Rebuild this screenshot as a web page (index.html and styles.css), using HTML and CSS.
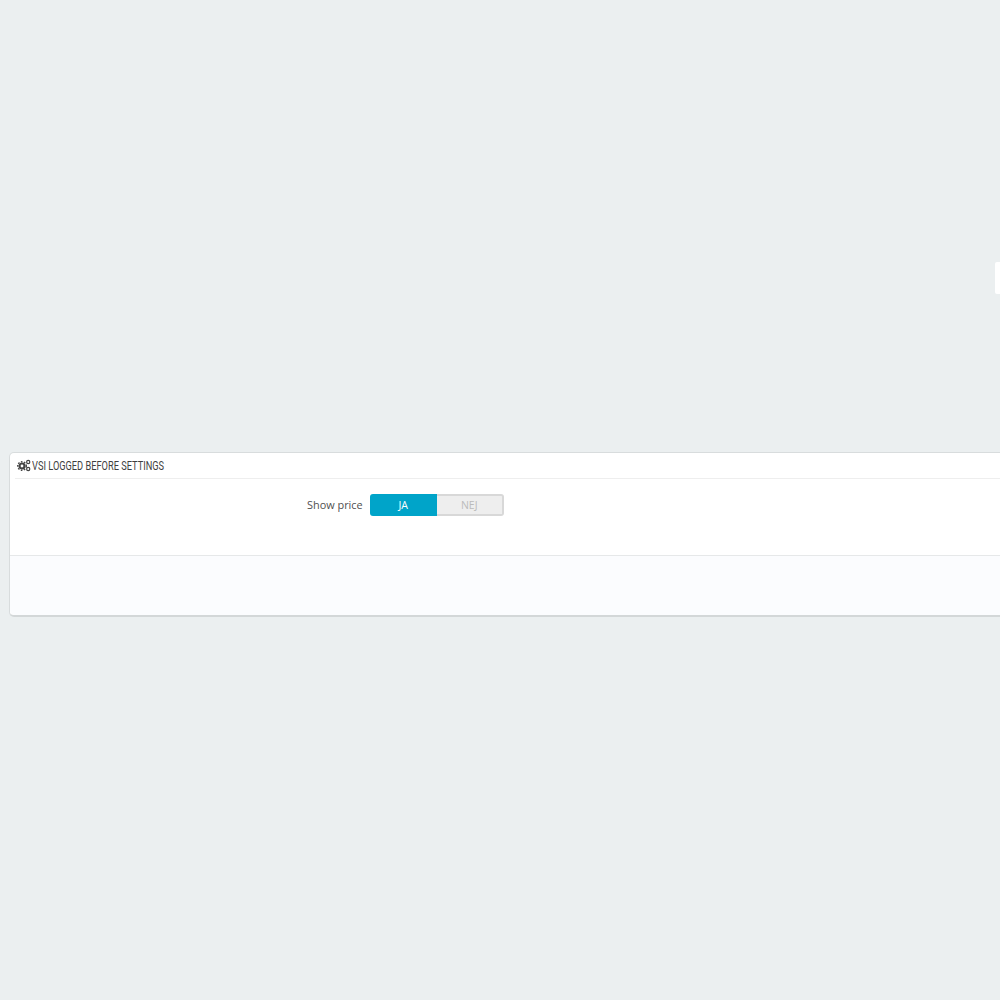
FILE: index.html
```html
<!DOCTYPE html>
<html lang="en">
<head>
    <meta charset="UTF-8">
    <meta name="viewport" content="width=device-width, initial-scale=1.0">
    <title>VSI Logged Before Settings</title>
    <link rel="stylesheet" href="styles.css">
</head>
<body>
    <div class="side-tab"></div>
    <div class="panel">
        <h3 class="panel-heading">
            <svg class="cogs-icon" width="14" height="13" viewBox="0 0 14 13">
                <g fill="none" stroke="#444">
                    <circle cx="5" cy="7" r="2.5" stroke-width="2.2"/>
                    <circle cx="5" cy="7" r="4.3" stroke-width="1.4" stroke-dasharray="1.6 1.5"/>
                    <circle cx="11.2" cy="3" r="1.6" stroke-width="1.2"/>
                    <circle cx="11.2" cy="10" r="1.6" stroke-width="1.2"/>
                </g>
            </svg>
            <span class="panel-title">VSI LOGGED BEFORE SETTINGS</span>
        </h3>
        <div class="form-row">
            <label class="form-label">Show price</label>
            <div class="switch">
                <span class="switch-on">JA</span>
                <span class="switch-off">NEJ</span>
            </div>
        </div>
        <div class="panel-footer"></div>
    </div>
</body>
</html>
```

FILE: styles.css
```css
body {
    margin: 0;
    height: 1000px;
    overflow: hidden;
    background-color: #ebeff0;
    font-family: "Open Sans", sans-serif;
    display: flow-root;
}

.side-tab {
    position: absolute;
    top: 262px;
    right: 0;
    width: 5px;
    height: 32px;
    background-color: #fff;
    border-radius: 2px 0 0 2px;
}

.panel {
    margin: 452px -20px 0 9px;
    height: 165px;
    box-sizing: border-box;
    background-color: #fff;
    border: 1px solid #d8dcdd;
    border-bottom: 2px solid #d3d7d8;
    border-radius: 5px;
    display: flex;
    flex-direction: column;
}

.panel-heading {
    margin: 0 0 0 5px;
    height: 25px;
    display: flex;
    align-items: center;
    gap: 1px;
    border-bottom: 1px solid #eeeeee;
    font-size: 12.5px;
    font-weight: 400;
    color: #3f3f3f;
}

.cogs-icon {
    margin-left: 2px;
}

/* no condensed face installed, so squeeze the heading */
.panel-title {
    font-family: "Roboto", sans-serif;
    transform: scaleX(0.74);
    transform-origin: left center;
    white-space: nowrap;
    margin-bottom: 1px;
}

.form-row {
    margin-top: 15px;
    height: 22px;
    display: flex;
    align-items: center;
    padding-left: 297px;
    flex: none;
}

.form-label {
    font-size: 10.9px;
    color: #4f4f4f;
    margin-right: 7px;
    margin-bottom: 2px;
}

.switch {
    display: flex;
    width: 134px;
    height: 22px;
    font-size: 10.5px;
    text-align: center;
    line-height: 22px;
}

.switch-on {
    width: 67px;
    background-color: #00a4c9;
    color: #fff;
    border-radius: 3px 0 0 3px;
}

.switch-off {
    width: 67px;
    box-sizing: border-box;
    background-color: #eeeeee;
    color: #bbb;
    border: 2px solid #d8d8d8;
    border-left: none;
    line-height: 18px;
    border-radius: 0 3px 3px 0;
}

.panel-footer {
    margin-top: 39px;
    flex: 1;
    background-color: #fbfcfe;
    border-top: 1px solid #e6e8e9;
    border-radius: 0 0 5px 5px;
}
```
